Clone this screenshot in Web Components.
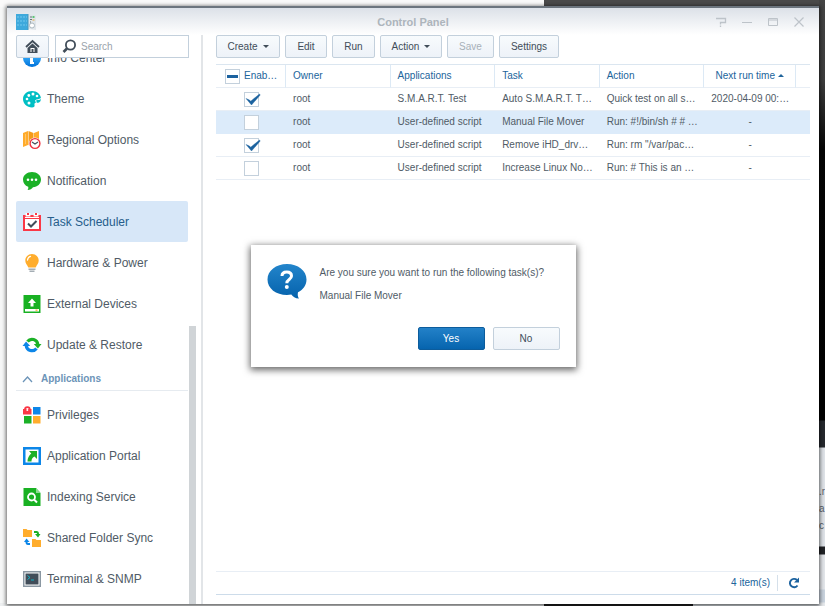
<!DOCTYPE html>
<html lang="en">
<head>
<meta charset="utf-8">
<title>Control Panel</title>
<style>
html,body{margin:0;height:100%;overflow:hidden}
body{font:10px/16px "Liberation Sans",Arial,sans-serif;color:#505b66}
</style>
</head>
<body>
<desk-top>
  <control-window heading="Control Panel">
    <side-nav slot="nav">
      <nav-item icon="info" label="Info Center"></nav-item>
      <nav-item icon="theme" label="Theme"></nav-item>
      <nav-item icon="region" label="Regional Options"></nav-item>
      <nav-item icon="bubble" label="Notification"></nav-item>
      <nav-item icon="task" label="Task Scheduler" active></nav-item>
      <nav-item icon="bulb" label="Hardware &amp; Power"></nav-item>
      <nav-item icon="disk" label="External Devices"></nav-item>
      <nav-item icon="update" label="Update &amp; Restore"></nav-item>
      <nav-group>Applications</nav-group>
      <nav-item icon="priv" label="Privileges"></nav-item>
      <nav-item icon="portal" label="Application Portal"></nav-item>
      <nav-item icon="index" label="Indexing Service"></nav-item>
      <nav-item icon="folders" label="Shared Folder Sync"></nav-item>
      <nav-item icon="term" label="Terminal &amp; SNMP"></nav-item>
    </side-nav>
    <tool-bar slot="main">
      <ui-button menu style="--w:64px">Create</ui-button>
      <ui-button style="--w:42px">Edit</ui-button>
      <ui-button style="--w:43px">Run</ui-button>
      <ui-button menu style="--w:62px">Action</ui-button>
      <ui-button disabled style="--w:47px">Save</ui-button>
      <ui-button style="--w:60px">Settings</ui-button>
    </tool-bar>
    <task-table slot="main"></task-table>
    <status-bar slot="main">4 item(s)</status-bar>
    <confirm-box slot="dialog">
      <span>Are you sure you want to run the following task(s)?</span>
      <span>Manual File Mover</span>
      <ui-button slot="actions" primary style="--w:67px">Yes</ui-button>
      <ui-button slot="actions" style="--w:67px">No</ui-button>
    </confirm-box>
  </control-window>
</desk-top>
<script>
const svg = (size, body) => `<svg width="${size}" height="${size}" viewBox="0 0 18 18" aria-hidden="true">${body}</svg>`;
const ICONS = {
  info: '<defs><linearGradient id="g" x2="0" y2="1"><stop offset=".5" stop-color="#2aa0f4"/><stop offset="1" stop-color="#0070d8"/></linearGradient></defs><circle cx="9" cy="9" r="9" fill="url(#g)"/><path d="M7 7h3v6h1v2H7z" fill="#fff"/><circle cx="9" cy="4.500" r="1.500" fill="#fff"/>',
  theme: '<path d="M9 1C4 1 0 4.500 0 9s4 8.500 9 8.500c2 0 3-1 2.500-2.500-.5-1.800.7-2.800 2.500-2.500 2.500.4 4-1 4-3.500C18 4.500 14 1 9 1z" fill="#00bfc4"/><path d="M12 10.500c2-2 4-.8 6-2.500v3c-1.500 2-3.500 1.500-5 1.700z" fill="#fff"/><path d="M13 10.500c2-1 3.500 0 5-1.500-.2 2.500-2 4-4 3.700z" fill="#00bfc4"/><g fill="#fff"><circle cx="4" cy="9" r="1.300"/><circle cx="5.800" cy="5.500" r="1.400"/><circle cx="10" cy="4" r="1.500"/><circle cx="14" cy="6" r="1.300"/><circle cx="6" cy="13" r="1.500"/></g>',
  region: '<path d="M0 2l5-2v14l-5 2z" fill="#ffab2b"/><path d="M5.500 0l5 2v14l-5-2z" fill="#f59b18"/><path d="M11 2l5-2v15l-5 1z" fill="#ffab2b"/><path d="M2.500 3v10" stroke="#ffc568"/><circle cx="12" cy="12.500" r="6" fill="#fff"/><circle cx="12" cy="12.500" r="4.900" fill="#fff" stroke="#ee3341" stroke-width="1.400"/><path d="M9 11l3 2 3-2" fill="none" stroke="#46535e" stroke-width="1.200"/>',
  bubble: '<path d="M9 0c5 0 9 3.200 9 7.500S14.500 15 10 15.300c-1 1.500-2.800 2.700-5.500 2.700.8-1 1-2 .7-3.200C2 13.700 0 11 0 7.500 0 3.200 4 0 9 0z" fill="#1bb127"/><g fill="#fff"><circle cx="5" cy="7.800" r="1.300"/><circle cx="9" cy="7.800" r="1.300"/><circle cx="13" cy="7.800" r="1.300"/></g>',
  task: '<path d="M0 2h18v16H0z" fill="#fa3846"/><path d="M2 6h14v10H2z" fill="#fff"/><path d="M2 4.500h14" stroke="#fff"/><path d="M3.500 0v2.500h3V0M11.500 0v2.500h3V0" fill="none" stroke="#fff" stroke-width="1.800"/><path d="M4 0h2v2H4zM12 0h2v2h-2z" fill="#fa3846"/><path d="M5 10.500l3 3 5.500-5.500" fill="none" stroke="#414d59" stroke-width="2"/>',
  bulb: '<path d="M9 0c4 0 6.700 3 6.700 6.500 0 3-1.700 4-3 7H5.300c-1.300-3-3-4-3-7C2.300 3 5 0 9 0z" fill="#ffad2d"/><path d="M4.500 6c.3-2.200 1.500-3.200 3-3.600" fill="none" stroke="#fff" stroke-width="1.300" stroke-linecap="round"/><path d="M5.500 14.500h7v1.500h-7zM6.500 16.500h5V18h-5z" fill="#a4adb4"/>',
  disk: '<path d="M0.500 0h17v18h-17z" fill="#19b123"/><path d="M2 14h14v2.500H2z" fill="#fff"/><path d="M12.500 14.500h2v1.300h-2z" fill="#ffad2d"/><path d="M9 3.500l4 4.500h-2.500v3.500h-3V8H5z" fill="#fff"/>',
  update: '<path d="M4.500 5.500A5.800 5.800 0 0 1 14.800 8.500" fill="none" stroke="#1bb127" stroke-width="3.200"/><path d="M10.800 8H18.500l-3.600 4.500z" fill="#1bb127"/><path d="M13.500 12.500A5.800 5.800 0 0 1 3.200 9.500" fill="none" stroke="#0c86e8" stroke-width="3.200"/><path d="M7.200 10H-.5l3.600-4.500z" fill="#0c86e8"/>',
  priv: '<path d="M2 5V3.500a2.300 2.300 0 0 1 4.800 0V5" fill="none" stroke="#fa3846" stroke-width="1.800"/><path d="M0 3h8.500v5.500H0z" fill="#fa3846"/><circle cx="4.300" cy="4" r="1" fill="#fff"/><path d="M10 1h7.500v7.500H10z" fill="#0c86e8"/><path d="M1 10h7.500v7.500H1z" fill="#1bb127"/><path d="M10 10h7.500v7.500H10z" fill="#ffad2d"/>',
  portal: '<path d="M0 0h18v18H0z" fill="#0c86e8"/><path d="M2.500 2.500h13v13h-13z" fill="#fff"/><path d="M6 4h8v8l-2.500-2.500C9 11 8.500 12 8.500 14.500H4.500C4.500 11 6 8.500 8.300 6.500z" fill="#1bb127"/>',
  index: '<path d="M.5 0H13l4.500 5v13H.5z" fill="#19b123"/><path d="M13 0v5h4.500z" fill="#8edb92"/><circle cx="8.500" cy="9" r="3.500" fill="none" stroke="#fff" stroke-width="1.800"/><path d="M11 11.500l3 3" stroke="#fff" stroke-width="2"/>',
  folders: '<path d="M0 0h3.500l1 1H9v7H0zM9 10h3.500l1 1H18v7H9z" fill="#ffad2d"/><path d="M11 3h2.500q1.500 0 1.500 2v1" fill="none" stroke="#1bb127" stroke-width="2"/><path d="M12 5h5.500L15 8.500z" fill="#1bb127"/><path d="M7 15H5q-1.500 0-1.500-2v-1" fill="none" stroke="#0c86e8" stroke-width="2"/><path d="M1 13h5.500L3.500 9.500z" fill="#0c86e8"/>',
  term: '<path d="M0 1h18v16H0z" fill="#8a97a2"/><path d="M1.500 2.500h15v13h-15z" fill="#fff"/><path d="M2.500 3.500h13v11h-13z" fill="#414d59"/><path d="M4.500 5.500l2.500 2-2.500 2M8 10h3" fill="none" stroke="#0fb5c8"/>'
};
function define(name, html, setup) {
  customElements.define(name, class extends HTMLElement {
    constructor() {
      super();
      const root = this.attachShadow({ mode: 'open' });
      root.innerHTML = typeof html === 'function' ? html(this) : html;
      if (setup) setup(this, root);
    }
  });
}

define('desk-top', `<style>
:host{display:flex;box-sizing:border-box;height:100vh;position:relative;overflow:hidden;
background:linear-gradient(90deg,#fafafa 66%,#4a4a4a 66%) 0 0/100% 7px no-repeat,
linear-gradient(90deg,#eef0f1 66%,#222 66% 84%,#dce1e6 84%) 0 100%/100% 3px no-repeat,#f7f8f8}
.stage{flex:1;display:flex;padding:6px 0 2px 7px;min-width:0}
aside{width:6px;flex:none;overflow:hidden;color:#59626b;line-height:17px;
background:linear-gradient(#444,#3d3d3d 80px,#050505 150px,#000 420px,#25282d 421px 447px,#dfe3e8 448px 546px,#202226 547px 554px,#e3e6ea 555px 589px,#c9d3de 590px 602px,#e6e9ec 603px)}
p{margin:0;padding-top:483px;white-space:pre}
</style><div class="stage"><slot></slot></div><aside><p>.r
a
c</p></aside>`);

define('control-window', el => `<style>
:host{display:flex;flex-direction:column;flex:1;min-width:0;position:relative;background:#fff;border-top:2px solid #6c757e;box-sizing:border-box;box-shadow:0 1px 4px 1px rgba(0,0,0,.6);}
header{display:grid;grid-template-columns:1fr auto 1fr;align-items:center;height:27px;flex:none;padding:0 9px;background:linear-gradient(#dce1e8,#fff);box-sizing:border-box}
h1{margin:0;font-size:11px;line-height:16px;color:#adb5bc}
.ctl{display:flex;gap:14px;justify-content:flex-end;margin-right:5px}
.ctl button{all:unset;width:12px;height:12px;display:block}
svg{display:block}
.body{flex:1;min-height:0;display:grid;grid-template-columns:196px 1fr}
.nav{border-right:2px solid #e2e5e8;min-height:0;display:flex}
main{min-width:0;min-height:0;display:flex;flex-direction:column;padding:0 9px 9px 13px}
</style>
<header>
<svg width="20" height="18" viewBox="0 0 20 18"><path d="M0 1h12v16H0z" fill="#3ea9dc"/><path d="M1 4h10M1 8h10M1 12h10" stroke="#73c8ee" stroke-dasharray="2 1"/><path d="M12 1l8 1v15l-8-1z" fill="#dfe5e9"/><path d="M12 1v16" stroke="#4897bd"/><path d="M14 4h2M14 6.500h2M14 9h1" stroke="#67737b"/><path d="M16.500 4h2" stroke="#30b950" stroke-width="1.500"/><path d="M16.500 7h2" stroke="#e7a53b"/><circle cx="16" cy="12.500" r="2.500" fill="#fff" stroke="#aebac2"/></svg>
<h1>${el.getAttribute('heading')}</h1>
<div class="ctl">
<button aria-label="Help"><svg width="12" height="12" fill="none" stroke="#bdc3c9"><path d="M1 2.500h9.500v4H5.500v2M5.500 9.500v1.500" stroke-width="1.300"/></svg></button>
<button aria-label="Minimize"><svg width="12" height="12" stroke="#bdc3c9"><path d="M1 6.500h10"/></svg></button>
<button aria-label="Maximize"><svg width="12" height="12" fill="none" stroke="#bdc3c9"><path d="M1.500 2.500h9v7h-9zM1 4h10"/></svg></button>
<button aria-label="Close"><svg width="12" height="12" stroke="#bdc3c9" stroke-width="1.200"><path d="M1.500 1.500l9 9M10.500 1.500l-9 9"/></svg></button>
</div></header>
<div class="body"><div class="nav"><slot name="nav"></slot></div><main><slot name="main"></slot></main></div>
<slot name="dialog"></slot>`);

define('side-nav', `<style>
:host{display:flex;flex-direction:column;flex:1;min-width:0}
.top{display:flex;gap:6px;padding:0 12px 0 9px;flex:none;position:relative;background:#fff}
.home{width:33px;height:23px;box-sizing:border-box;padding:0;border:1px solid #c3d0dc;border-radius:2px;background:linear-gradient(#f7fafd,#edf2f8);display:grid;place-items:center}
label{flex:1;min-width:0;display:flex;align-items:center;gap:4px;border:1px solid #c3d0dc;height:23px;box-sizing:border-box;padding:0 6px}
input{border:0;outline:0;padding:0;flex:1;min-width:0;font:inherit;background:none;color:inherit}
input::placeholder{color:#9aa3ab;opacity:1}
.wrap{flex:1;min-height:0;display:flex}
.list{flex:1;min-width:0;overflow:hidden;padding:0 0 6px 9px}
.bar{width:7px;margin:0 5px 0 1px;display:flex;align-items:flex-end}
.bar i{width:7px;height:51%;background:#d0d4d7}
</style>
<div class="top"><button class="home" aria-label="Home"><svg width="15" height="15" viewBox="0 0 15 15"><path d="M1 8l6.500-6L14 8" fill="none" stroke="#414d59" stroke-width="1.800"/><path d="M7.500 4.500L12.500 9v5h-10V9z" fill="#414d59"/><path d="M5.500 9h4v4h-4z" fill="#fff"/><path d="M6.500 10h2v4h-2z" fill="#414d59"/></svg></button>
<label><svg width="15" height="15" viewBox="0 0 15 15" fill="none" stroke="#414d59"><circle cx="8.500" cy="6" r="4.600" stroke-width="1.800"/><path d="M5 9.500L1.500 13" stroke-width="2.600"/></svg><input type="text" placeholder="Search" aria-label="Search"></label></div>
<div class="wrap"><nav class="list"><slot></slot></nav><div class="bar"><i></i></div></div>`,
(el, root) => requestAnimationFrame(() => { root.querySelector('.list').scrollTop = 21; }));

define('nav-item', el => `<style>
:host{display:block}
a{display:flex;align-items:center;gap:6px;height:41px;padding:0 7px;color:#505b66;text-decoration:none;font-size:12px;line-height:16px;border-radius:2px;white-space:nowrap}
svg{flex:none;overflow:visible}
:host([active]) a{background:#d7e7f8;color:#265d8b}
</style><a href="#${el.getAttribute('icon')}">${svg(18, ICONS[el.getAttribute('icon')])}<span>${el.getAttribute('label').replace('&', '&amp;')}</span></a>`);

define('nav-group', `<style>
:host{display:flex;align-items:center;gap:8px;height:22px;padding:3px 0 0 6px;margin-bottom:3px;border-bottom:1px solid #e6ebf0;color:#6c94b8;font-weight:bold}
</style><svg width="11" height="8" fill="none" stroke="#6c94b8" stroke-width="1.300"><path d="M1 7l4.500-5L10 7"/></svg><slot></slot>`);

define('tool-bar', `<style>:host{display:flex;gap:5px;flex:none;margin-bottom:6px}</style><slot></slot>`);

define('ui-button', el => `<style>
:host{display:block}
button{width:var(--w);height:23px;box-sizing:border-box;padding:0;border:1px solid #c3d0dc;border-radius:2px;background:linear-gradient(#f8fbfd,#edf2f8);font:inherit;color:#414d59;display:flex;align-items:center;justify-content:center;gap:5px}
button:disabled{color:#a7b0b8}
:host([primary]) button{background:linear-gradient(#2381c8,#0664ae);border-color:#0c5c9c;color:#fff}
</style><button ${el.hasAttribute('disabled') ? 'disabled' : ''}><slot></slot>${el.hasAttribute('menu') ? '<svg width="6" height="3"><path d="M0 0h6L3 3z" fill="#414d59"/></svg>' : ''}</button>`);

define('check-box', el => `<style>
:host{display:inline-grid;vertical-align:middle;width:15px;height:15px}
input,svg{grid-area:1/1}
input{appearance:none;margin:0;width:15px;height:15px;border:1px solid #c3d0dc;background:#fff;box-sizing:border-box}
svg{pointer-events:none;overflow:visible}
</style><input type="checkbox" aria-label="${el.getAttribute('label')}" ${el.hasAttribute('checked') ? 'checked' : ''}>
<svg width="15" height="15">${el.hasAttribute('checked') ? '<path d="M2 6.500l3.500 1.500 1.200 1.200L15.500 2l.7 1L7.500 13z" fill="#1b629f" stroke="#1b629f" stroke-width=".4"/>' : el.hasAttribute('mixed') ? '<path d="M2 6h11v3H2z" fill="#1b629f"/>' : ''}</svg>`,
(el, root) => { root.querySelector('input').indeterminate = el.hasAttribute('mixed'); });

const ROWS = [
  [1, 'root', 'S.M.A.R.T. Test', 'Auto S.M.A.R.T. T…', 'Quick test on all s…', '2020-04-09 00:…'],
  [0, 'root', 'User-defined script', 'Manual File Mover', 'Run: #!/bin/sh # # …', '-'],
  [1, 'root', 'User-defined script', 'Remove iHD_drv…', 'Run: rm "/var/pac…', '-'],
  [0, 'root', 'User-defined script', 'Increase Linux No…', 'Run: # This is an …', '-']
];
define('task-table', `<style>
:host{display:block;flex:1;min-height:0}
table{width:100%;table-layout:fixed;border-collapse:separate;border-spacing:0;border-top:1px solid #dbe6f0}
th,td{box-sizing:border-box;height:23px;padding:0 0 0 7px;text-align:left;font-weight:normal;line-height:16px;white-space:nowrap;overflow:hidden;border-bottom:1px solid #e8eef5}
th{color:#20649b;border-right:1px solid #dce9f5}
th:last-child{border-right:0}
th:first-child{padding-left:9px}
th:first-child span{display:flex;align-items:center;gap:4px}
td:first-child{text-align:center;padding:0}
td:nth-child(6),th:nth-child(6){text-align:center;padding:0}
tr.on td{background:#dcebfa;border-color:#dcebfa}
th svg{margin-left:3px;vertical-align:2px}
</style><table><colgroup><col style="width:11.800%"><col style="width:17.600%"><col style="width:17.600%"><col style="width:17.600%"><col style="width:17.600%"><col style="width:15.500%"><col></colgroup>
<thead><tr><th><span><check-box mixed label="Enable all"></check-box>Enab…</span></th><th>Owner</th><th>Applications</th><th>Task</th><th>Action</th><th>Next run time<svg width="6" height="3"><path d="M0 3h6L3 0z" fill="#20649b"/></svg></th><th></th></tr></thead>
<tbody>${ROWS.map((r, i) => `<tr${i === 1 ? ' class="on"' : ''}><td><check-box label="Enabled" ${r[0] ? 'checked' : ''}></check-box></td>${r.slice(1).map(c => `<td>${c}</td>`).join('')}<td></td></tr>`).join('')}</tbody></table>`);

define('status-bar', `<style>
:host{display:flex;align-items:center;justify-content:flex-end;height:24px;flex:none;box-sizing:border-box;border-top:1px solid #e8eef5;border-bottom:1px solid #cddcea;color:#20649b}
button{all:unset;display:block;margin-left:7px;padding:2px 10px;border-left:1px solid #d5e0ea}
svg{display:block}
</style><slot></slot><button aria-label="Refresh"><svg width="12" height="12" viewBox="0 0 12 12"><path d="M9.500 8.500A4.200 4.200 0 1 1 9 3" fill="none" stroke="#1b629f" stroke-width="1.900"/><path d="M11 .5v5H6z" fill="#1b629f"/></svg></button>`);

define('confirm-box', `<style>
:host{position:absolute;inset:0;display:grid;place-items:center;pointer-events:none}
section{pointer-events:auto;width:325px;box-sizing:border-box;background:#fff;box-shadow:0 2px 7px 1px rgba(0,0,0,.6);padding:16px 16px 17px;display:grid;grid-template-columns:40px 1fr;gap:20px 13px}
.msg{display:grid;grid-auto-rows:23px;align-items:center}
.act{grid-column:1/-1;display:flex;gap:8px;justify-content:flex-end}
</style><section role="dialog" aria-label="Confirm"><svg width="40" height="40" viewBox="0 0 40 40"><defs><linearGradient id="q" x2="0" y2="1"><stop stop-color="#2385cb"/><stop offset="1" stop-color="#0562ac"/></linearGradient></defs><path d="M20 3C9 3 .5 9.500.5 18.500S9 34 20 34c1.500 0 3-.1 4.300-.4C26 36 28 37.500 32 37.500c-1.300-1.800-1.500-4-1-6.300 5.300-2.600 8.500-7.200 8.500-12.700C39.500 9.500 31 3 20 3z" fill="url(#q)"/><path d="M15 15c0-2.700 2-4 4.700-4 2.800 0 4.800 1.400 4.800 4 0 3.600-4.700 3.400-4.700 7.200" fill="none" stroke="#fff" stroke-width="3"/><circle cx="19.800" cy="26" r="2" fill="#fff"/></svg>
<div class="msg"><slot></slot></div><div class="act"><slot name="actions"></slot></div></section>`);
</script>
</body>
</html>
